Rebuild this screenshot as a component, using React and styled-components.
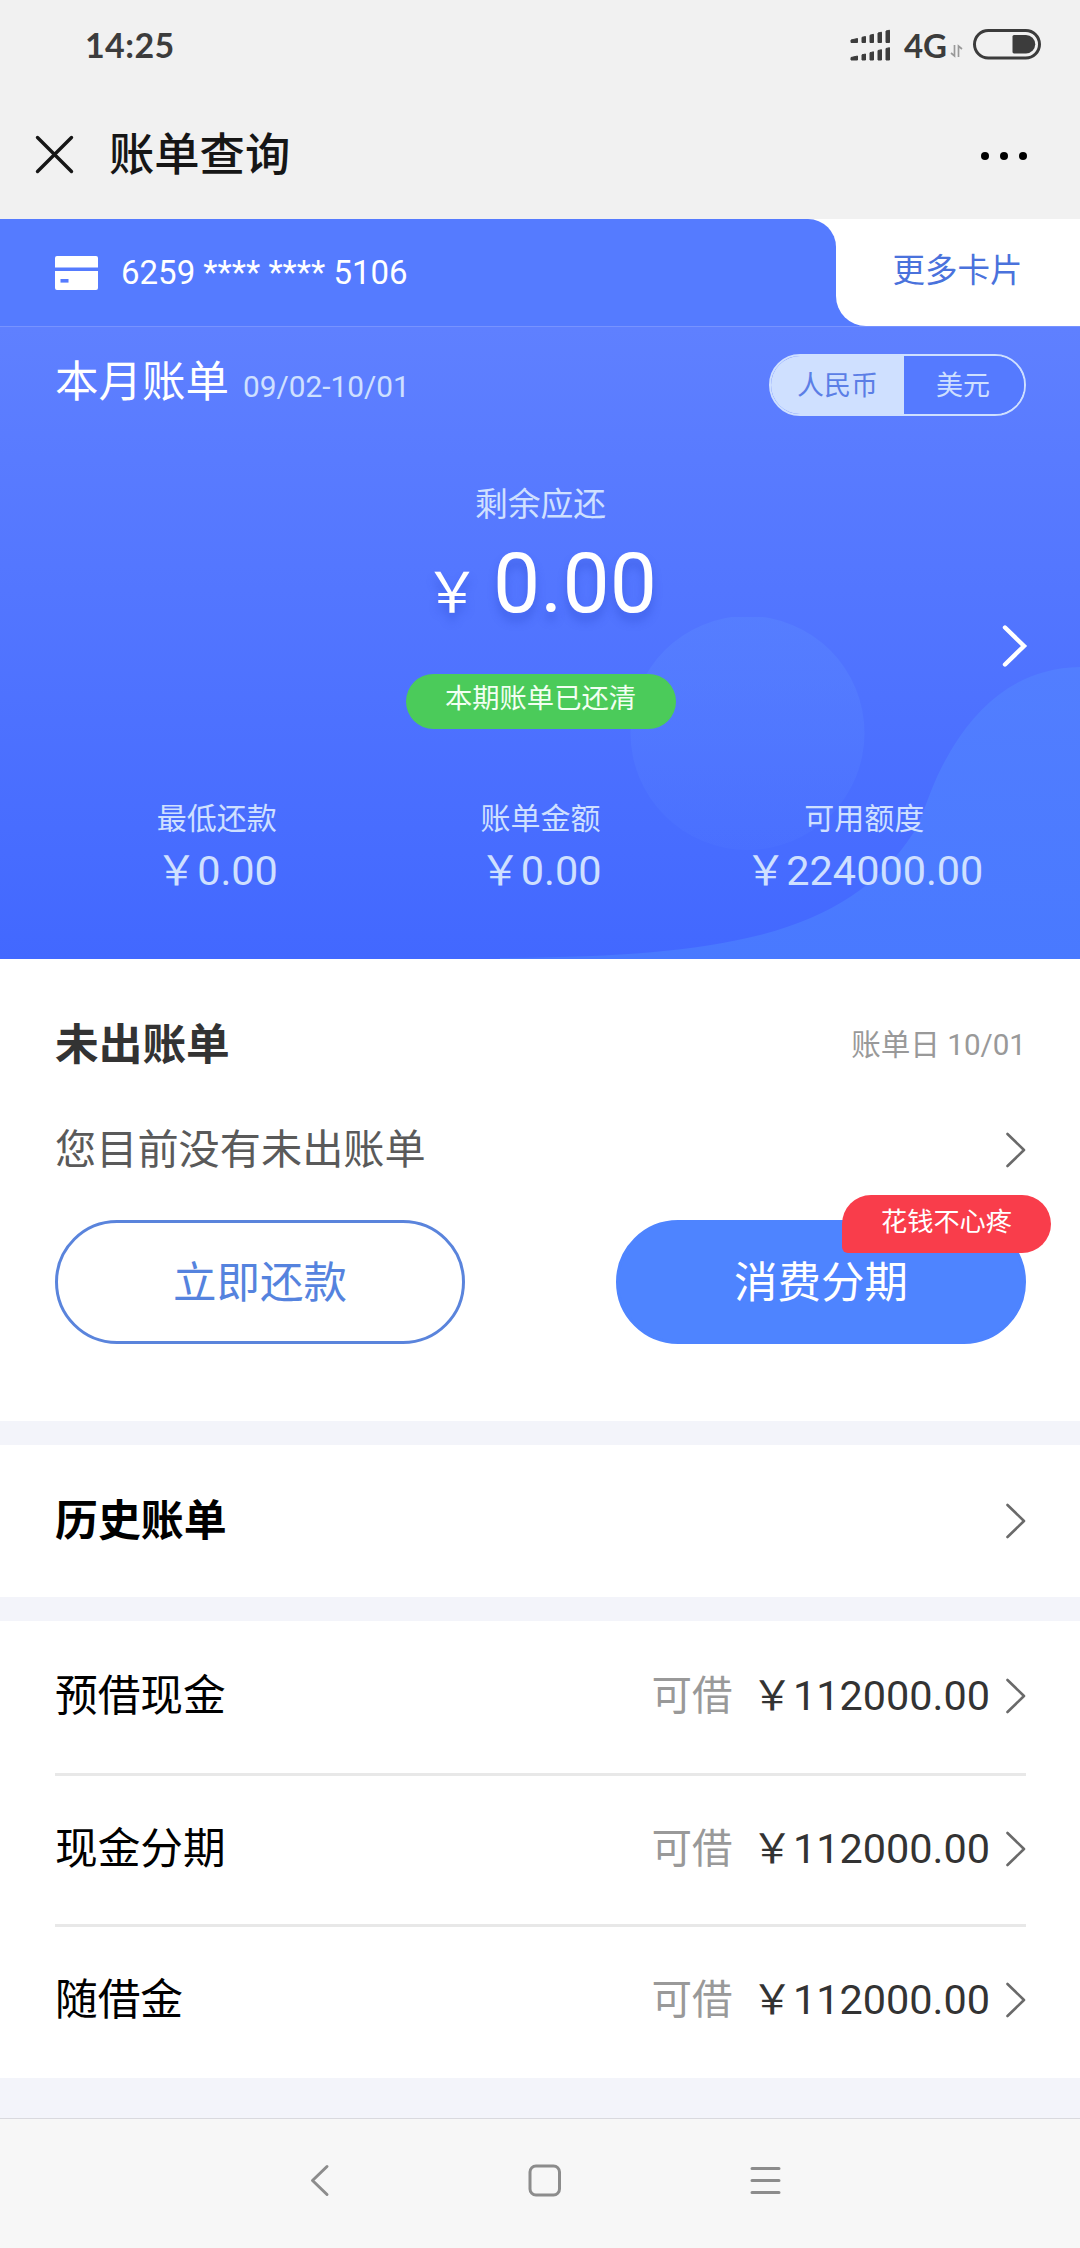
import React from "react";
import styled, { createGlobalStyle, css } from "styled-components";

const GlobalStyle = createGlobalStyle`
  * { box-sizing: border-box; }
  body {
    margin: 0;
    background: #f3f4fa;
    font-family: Roboto, "Noto Sans CJK SC", sans-serif;
  }
`;

const Screen = styled.div`
  width: 1080px;
  height: 2248px;
  display: flex;
  flex-direction: column;
  background: #f3f4fa;
  overflow: hidden;
`;

/* ---------- system bar and title bar ---------- */

const StatusBar = styled.div`
  height: 90px;
  flex: none;
  display: flex;
  justify-content: space-between;
  padding: 0 39px 0 85px;
  background: #f1f1f1;
  color: #3c3c3c;
  font-family: Lato, sans-serif;
  font-weight: 700;
  line-height: 90px;
`;

const Clock = styled.span`
  font-size: 34px;
  letter-spacing: 0.4px;
`;

const StatusIcons = styled.div`
  display: flex;
  align-items: flex-start;
`;

const Network = styled.span`
  font-size: 33px;
  margin-left: 13px;
`;

const StatusSvg = styled.svg`
  display: block;
  margin-top: ${(p) => p.$top}px;
  margin-left: ${(p) => p.$left || 0}px;
`;

const TitleBar = styled.header`
  height: 129px;
  flex: none;
  display: flex;
  align-items: flex-start;
  padding: 44px 52px 0 34px;
  background: #f1f1f1;
`;

const Title = styled.h1`
  margin: -8px auto 0 34px;
  font-size: 45.3px;
  line-height: 60px;
  font-weight: 500;
  color: #161616;
`;

const TitleIcon = styled.svg`
  display: block;
  flex: none;
`;

/* ---------- current bill ---------- */

const CardStrip = styled.div`
  height: 107px;
  flex: none;
  display: flex;
  background: linear-gradient(#fff 0 50%, #557bff 50%);
`;

const ActiveCard = styled.div`
  width: 836px;
  display: flex;
  align-items: center;
  padding-left: 55px;
  background: #557bff;
  border-top-right-radius: 28px;
`;

const CardNumber = styled.span`
  margin-left: 23px;
  font-size: 33px;
  line-height: 44px;
  color: #fff;
`;

const MoreCards = styled.div`
  flex: 1;
  padding-right: 1px;
  background: #fff;
  border-bottom-left-radius: 30px;
  font-size: 32.5px;
  line-height: 104px;
  text-align: center;
  color: #4a72dc;
`;

const Bill = styled.section`
  height: 633px;
  flex: none;
  position: relative;
  padding: 27px 54px 0 55px;
  border-top: 1px solid #7793ff;
  background: linear-gradient(#5f80ff, #4268ff);
`;

const BillBackdrop = styled.svg`
  position: absolute;
  right: 0;
  bottom: 0;
`;

const BillHead = styled.div`
  position: relative;
  height: 62px;
  display: flex;
  justify-content: space-between;
`;

const BillTitle = styled.h2`
  margin: 0;
  font-size: 43.5px;
  line-height: 58px;
  font-weight: 400;
  color: #fff;
`;

const Period = styled.span`
  margin-left: 14px;
  font-size: 29.8px;
  color: #cfe0ff;
`;

const Currency = styled.div`
  width: 257px;
  height: 62px;
  display: flex;
  border: 2px solid #cfe0ff;
  border-radius: 31px;
  overflow: hidden;
`;

const CurrencyOption = styled.span`
  width: ${(p) => (p.$active ? 133 : 120)}px;
  padding-right: ${(p) => (p.$active ? 0 : 2)}px;
  font-size: 27px;
  line-height: 60px;
  text-align: center;
  color: ${(p) => (p.$active ? "#5b7ee6" : "#cfe0ff")};
  background: ${(p) => (p.$active ? "#cfe0ff" : "#557aff")};
`;

const Due = styled.div`
  position: relative;
  display: flex;
  flex-direction: column;
  align-items: center;
  padding-top: 67px;
`;

const DueLabel = styled.div`
  font-size: 32.8px;
  line-height: 44px;
  color: #cfe0ff;
`;

const DueAmount = styled.div`
  margin-top: 7px;
  padding-left: 0;
  font-size: 84px;
  line-height: 100px;
  color: #fff;
  text-shadow: 0 8px 10px rgba(40, 70, 200, 0.4);
`;

const DueSign = styled.span`
  font-size: 56px;
  margin-right: 13px;
`;

const PaidBadge = styled.div`
  width: 270px;
  height: 55px;
  margin-top: 31px;
  border-radius: 28px;
  background: #4bcb5a;
  color: #f2fff2;
  font-size: 27.3px;
  line-height: 50px;
  text-align: center;
`;

const Stats = styled.div`
  position: relative;
  display: grid;
  grid-template-columns: repeat(3, 1fr);
  margin-top: 70px;
  text-align: center;
  color: #cfe0ff;
`;

const StatLabel = styled.div`
  font-size: 30px;
  line-height: 40px;
`;

const StatValue = styled.div`
  margin-top: 6px;
  font-size: 41.4px;
  line-height: 52px;
`;

const DetailArrow = styled.svg`
  position: absolute;
  right: 52px;
  top: 297px;
`;

/* ---------- white panels ---------- */

const Panel = styled.section`
  flex: none;
  height: ${(p) => p.$height}px;
  margin-bottom: ${(p) => p.$gap || 0}px;
  padding: 0 54px 0 55px;
  background: #fff;
`;

const Line = styled.div`
  display: flex;
  align-items: center;
  justify-content: space-between;
  height: ${(p) => p.$height}px;
  padding-top: ${(p) => p.$top || 0}px;
  padding-bottom: ${(p) => p.$bottom || 0}px;
  ${(p) => p.$divider && css`border-bottom: 3px solid #e8e8e8;`}
`;

const Heading = styled.h2`
  margin: 0;
  font-size: ${(p) => p.$size}px;
  line-height: 60px;
  font-weight: 700;
  color: ${(p) => p.$color};
`;

const BillDay = styled.span`
  font-size: 29.6px;
  line-height: 40px;
  color: #999;
`;

const EmptyNote = styled.span`
  font-size: 41.2px;
  line-height: 56px;
  color: #5a5a5a;
`;

const Actions = styled.div`
  display: flex;
  justify-content: space-between;
  margin-top: 34px;
`;

const ActionButton = styled.button`
  position: relative;
  width: 410px;
  height: 124px;
  padding: 4px 0 0;
  border-radius: 62px;
  border: 3px solid ${(p) => (p.$primary ? "#4e84ff" : "#5a84dc")};
  background: ${(p) => (p.$primary ? "#4e84ff" : "#fff")};
  color: ${(p) => (p.$primary ? "#fff" : "#5583de")};
  font-family: inherit;
  font-size: 43.5px;
  line-height: 60px;
`;

const PromoTag = styled.span`
  position: absolute;
  top: -28px;
  right: -28px;
  width: 209px;
  height: 58px;
  border-radius: 29px 29px 29px 6px;
  background: #f93d4b;
  color: #fff;
  font-size: 26.2px;
  line-height: 54px;
  text-align: center;
`;

const ProductName = styled.span`
  flex: 1;
  font-size: 42.7px;
  line-height: 56px;
  color: #000;
`;

const Available = styled.span`
  margin-right: 19px;
  font-size: 40.5px;
  line-height: 56px;
  color: #999;
`;

const Limit = styled.span`
  margin-right: 14px;
  font-size: 41.4px;
  line-height: 56px;
  color: #333;
`;

const ArrowSvg = styled.svg`
  display: block;
  flex: none;
`;

/* ---------- system navigation ---------- */

const NavBar = styled.nav`
  height: 130px;
  flex: none;
  margin-top: auto;
  display: flex;
  justify-content: space-between;
  padding: 44px 297px 0 307px;
  border-top: 1px solid #d9d9de;
  background: #f7f7f7;
`;

const NavIcon = styled.svg`
  display: block;
  width: 36px;
  height: 36px;
  fill: none;
  stroke: #8c8c8c;
  stroke-width: 3;
  stroke-linecap: round;
  stroke-linejoin: round;
`;

const Arrow = () => (
  <ArrowSvg width="22" height="38" viewBox="0 0 22 38" fill="none">
    <path d="M3.5 3 L20 19 L3.5 35" stroke="#6a6a6a" strokeWidth="2.6" strokeLinecap="round" strokeLinejoin="round" />
  </ArrowSvg>
);

const Signal = () => (
  <StatusSvg $top={29} width="41" height="32" viewBox="0 0 41 32" fill="#3c3c3c">
    {[0, 17.5].map((y) => (
      <g key={y} transform={`translate(0 ${y})`} stroke="#3c3c3c" strokeWidth="1" strokeLinejoin="round">
        <path d="M1 11 L7.5 9.5 V13.5 H1 Z" />
        <path d="M12 8.3 L15.5 7.5 V13.5 H12 Z" />
        <path d="M20 6.2 L23.5 5.3 V13.5 H20 Z" />
        <path d="M28 4 L31.5 3.2 V13.5 H28 Z" />
        <path d="M36 2 L39.5 1.2 V13.5 H36 Z" />
      </g>
    ))}
  </StatusSvg>
);

const stats = [
  ["最低还款", "￥0.00"],
  ["账单金额", "￥0.00"],
  ["可用额度", "￥224000.00"],
];

const products = [
  { name: "预借现金", limit: "￥112000.00", height: 155 },
  { name: "现金分期", limit: "￥112000.00", height: 151 },
  { name: "随借金", limit: "￥112000.00", height: 151 },
];

export default function App() {
  return (
    <Screen>
      <GlobalStyle />
      <StatusBar>
        <Clock>14:25</Clock>
        <StatusIcons>
          <Signal />
          <Network>4G</Network>
          <StatusSvg $top={44} $left={3} width="13" height="14" viewBox="0 0 13 14" fill="none" stroke="#999" strokeWidth="1.7">
            <path d="M4.5 1 V12 L1 9 M8.5 13 V2 L12 5" />
          </StatusSvg>
          <StatusSvg $top={29} $left={10} width="68" height="31" viewBox="0 0 68 31">
            <rect x="1.5" y="1.5" width="65" height="27.5" rx="13.75" fill="none" stroke="#3c3c3c" strokeWidth="3" />
            <path d="M41 6 H53 A9.2 9.2 0 0 1 53 24.4 H41 Q39.5 24.4 39.5 23 V7.5 Q39.5 6 41 6 Z" fill="#3c3c3c" />
          </StatusSvg>
        </StatusIcons>
      </StatusBar>

      <TitleBar>
        <TitleIcon width="41" height="41" viewBox="0 0 41 41">
          <path d="M3.5 3.5 L37.5 37.5 M37.5 3.5 L3.5 37.5" stroke="#161616" strokeWidth="3.4" strokeLinecap="round" />
        </TitleIcon>
        <Title>账单查询</Title>
        <TitleIcon width="48" height="44" viewBox="0 0 48 44">
          <circle cx="5" cy="22" r="4" />
          <circle cx="24" cy="22" r="4" />
          <circle cx="43" cy="22" r="4" />
        </TitleIcon>
      </TitleBar>

      <CardStrip>
        <ActiveCard>
          <svg width="43" height="34" viewBox="0 0 43 34">
            <path d="M2 0 H41 Q43 0 43 2 V11.5 H0 V2 Q0 0 2 0 Z M0 15 H43 V32 Q43 34 41 34 H2 Q0 34 0 32 Z" fill="#fff" />
            <rect x="5.5" y="23" width="8" height="3.6" fill="#557bff" />
          </svg>
          <CardNumber>6259 **** **** 5106</CardNumber>
        </ActiveCard>
        <MoreCards>更多卡片</MoreCards>
      </CardStrip>

      <Bill>
        <BillBackdrop width="580" height="342" viewBox="500 617 580 342">
          <defs>
            <linearGradient id="disc" x1="0" y1="0" x2="0" y2="1">
              <stop offset="0" stopColor="#5a86ff" stopOpacity=".5" />
              <stop offset="1" stopColor="#5a86ff" stopOpacity=".12" />
            </linearGradient>
            <linearGradient id="wave" x1="0" y1="0" x2="0" y2="1">
              <stop offset="0" stopColor="#5484ff" stopOpacity=".65" />
              <stop offset="1" stopColor="#4a7cff" stopOpacity=".85" />
            </linearGradient>
          </defs>
          <circle cx="747.5" cy="733" r="117" fill="url(#disc)" />
          <path
            d="M500 958 C620 957 690 952 760 935 C830 917 880 885 914 832 C930 800 930 785 953 747 C980 703 1020 668 1080 667 V959 H500 Z"
            fill="url(#wave)"
          />
        </BillBackdrop>
        <BillHead>
          <BillTitle>
            本月账单
            <Period>09/02-10/01</Period>
          </BillTitle>
          <Currency>
            <CurrencyOption $active>人民币</CurrencyOption>
            <CurrencyOption>美元</CurrencyOption>
          </Currency>
        </BillHead>
        <Due>
          <DueLabel>剩余应还</DueLabel>
          <DueAmount>
            <DueSign>￥</DueSign>0.00
          </DueAmount>
          <PaidBadge>本期账单已还清</PaidBadge>
        </Due>
        <Stats>
          {stats.map(([label, value]) => (
            <div key={label}>
              <StatLabel>{label}</StatLabel>
              <StatValue>{value}</StatValue>
            </div>
          ))}
        </Stats>
        <DetailArrow width="28" height="44" viewBox="0 0 28 44" fill="none">
          <path d="M5 3.5 L24 22 L5 40.5" stroke="#fff" strokeWidth="4.4" strokeLinecap="round" strokeLinejoin="miter" />
        </DetailArrow>
      </Bill>

      <Panel $height={462} $gap={24}>
        <Line $height={120} $top={51}>
          <Heading $size={43.7} $color="#333">未出账单</Heading>
          <BillDay>账单日 10/01</BillDay>
        </Line>
        <Line $height={107} $top={34}>
          <EmptyNote>您目前没有未出账单</EmptyNote>
          <Arrow />
        </Line>
        <Actions>
          <ActionButton>立即还款</ActionButton>
          <ActionButton $primary>
            消费分期
            <PromoTag>花钱不心疼</PromoTag>
          </ActionButton>
        </Actions>
      </Panel>

      <Panel $height={152} $gap={24}>
        <Line $height={152}>
          <Heading $size={42.9} $color="#000">历史账单</Heading>
          <Arrow />
        </Line>
      </Panel>

      <Panel $height={457}>
        {products.map(({ name, limit, height }, i) => (
          <Line key={name} $height={height} $bottom={i < 2 ? 3 : 5} $divider={i < 2}>
            <ProductName>{name}</ProductName>
            <Available>可借</Available>
            <Limit>{limit}</Limit>
            <Arrow />
          </Line>
        ))}
      </Panel>

      <NavBar>
        <NavIcon viewBox="0 0 36 36">
          <path d="M20 3.5 L5.5 17.5 L20 31.5" />
        </NavIcon>
        <NavIcon viewBox="0 0 36 36">
          <rect x="3" y="3" width="29.5" height="29" rx="6" />
        </NavIcon>
        <NavIcon viewBox="0 0 36 36">
          <path d="M5 5.5 H32 M5 17.5 H32 M5 29.5 H32" />
        </NavIcon>
      </NavBar>
    </Screen>
  );
}
